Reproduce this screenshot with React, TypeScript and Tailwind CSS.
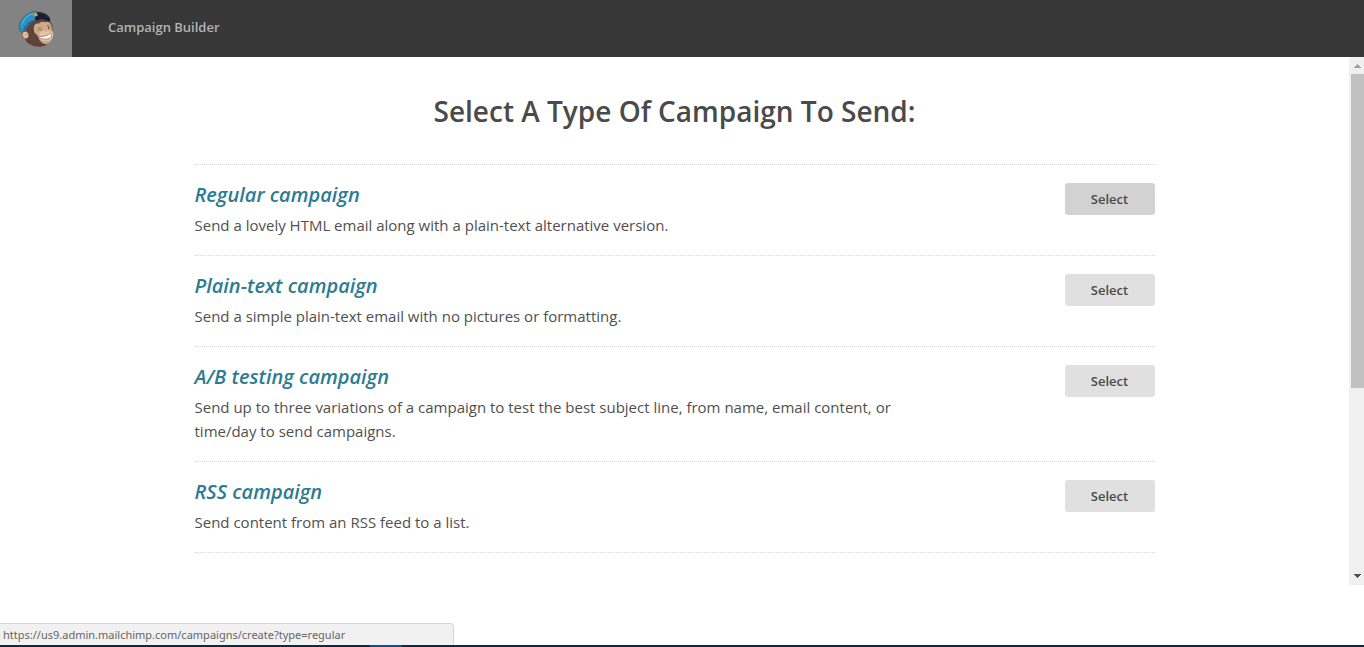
const campaigns = [
  {
    id: "regular",
    title: "Regular campaign",
    text: "Send a lovely HTML email along with a plain-text alternative version.",
  },
  {
    id: "plaintext",
    title: "Plain-text campaign",
    text: "Send a simple plain-text email with no pictures or formatting.",
  },
  {
    id: "ab",
    title: "A/B testing campaign",
    text: "Send up to three variations of a campaign to test the best subject line, from name, email content, or time/day to send campaigns.",
  },
  {
    id: "rss",
    title: "RSS campaign",
    text: "Send content from an RSS feed to a list.",
  },
];

function MonkeyLogo() {
  return (
    <svg viewBox="0 0 132 132" className="size-11" aria-hidden="true">
      {/* head */}
      <path
        d="M28 68 C24 76 24 80 30 86 C31 98 36 109 47 115 C62 124 84 125 97 116 C108 110 112 103 114 96 C118 88 120 80 115 72 C118 56 112 46 98 40 L60 38 Z"
        fill="#5e423b"
      />
      {/* face */}
      <path
        d="M94 49 C87 45 78 47 74 53 C68 51 61 55 60 62 C58 69 60 76 62 81 C66 84 71 88 74 96 C76 105 83 112 93 114 C104 114 111 107 114 98 C119 89 121 80 113 71 C115 60 110 49 102 48 C99 47 96 48 94 49 Z"
        fill="#cfaa8a"
      />
      <path d="M78 78 C86 70 102 70 114 74 C118 80 118 90 113 99 C103 108 86 106 75 96 Z" fill="#e5c5a1" />
      {/* ear */}
      <path
        d="M38 77 C31 73 24 78 25 86 C26 95 34 101 41 96 C46 91 45 81 38 77 Z"
        fill="#e8c3a2"
        stroke="#7b5848"
        strokeWidth="2"
      />
      <path d="M32 83 C37 82 39 88 35 91" fill="none" stroke="#a97a60" strokeWidth="2" />
      {/* eyes and nose */}
      <path d="M71 68 C76 64 82 66 85 71 M71 74 C76 70 80 71 84 75" fill="none" stroke="#a27c50" strokeWidth="3" />
      <path d="M99 60 C103 57 106 59 108 62" fill="none" stroke="#7b5741" strokeWidth="3" />
      <ellipse cx="104" cy="66" rx="2" ry="3" fill="#4a332a" />
      <path d="M92 76 C94 72 98 73 99 76 M103 76 C105 72 109 73 110 76" fill="none" stroke="#ad8263" strokeWidth="2" />
      {/* smile */}
      <path
        d="M75 91 C85 93 101 90 111 81 C113 87 112 93 108 97 C98 101 84 100 76 95 Z"
        fill="#ffffff"
        stroke="#8c6650"
        strokeWidth="2"
      />
      {/* cap */}
      <path
        d="M18 74 C14 62 15 52 24 41 C31 30 44 20 58 17 C67 14 74 18 76 24 L67 42 C52 47 41 57 34 75 C28 79 21 80 18 74 Z"
        fill="#2c92c4"
        stroke="#3c4c57"
        strokeWidth="2"
      />
      <path d="M23 56 C28 39 41 27 57 22" fill="none" stroke="#45a8d4" strokeWidth="5" />
      <path d="M29 74 C34 57 46 47 64 42" fill="none" stroke="#1f6c96" strokeWidth="4" />
      <path
        d="M62 20 C78 14 98 21 107 35 C111 42 109 47 102 46 C93 38 79 37 67 45 C61 37 60 27 62 20 Z"
        fill="#171f31"
      />
      <path d="M76 22 C88 22 97 27 103 34" fill="none" stroke="#35415a" strokeWidth="2" />
      <path d="M60 17 L65 21 L70 19 L69 25 L72 30 L66 30 L63 35 L61 29 L56 27 L61 24 Z" fill="#b9ad55" />
    </svg>
  );
}

function ScrollRail() {
  return (
    <div className="flex w-[15px] shrink-0 flex-col bg-[#f0f0f0]" aria-hidden="true">
      <div className="flex h-[17px] shrink-0 items-center justify-center pl-0.5">
        <svg viewBox="0 0 7 4" className="h-1 w-[7px]" shapeRendering="crispEdges">
          <path d="M3 0h1v1h1v1h1v1h1v1H0V3h1V2h1V1h1z" fill="#a3a3a3" />
        </svg>
      </div>
      <div className="ml-0.5 grow-[7] basis-0 bg-[#c1c1c1]" />
      <div className="grow-[4] basis-0" />
      <div className="flex h-[17px] shrink-0 items-center justify-center pb-px pl-0.5">
        <svg viewBox="0 0 7 4" className="h-1 w-[7px]" shapeRendering="crispEdges">
          <path d="M0 0h7v1H6v1H5v1H4v1H3V3H2V2H1V1H0z" fill="#505050" />
        </svg>
      </div>
    </div>
  );
}

export default function App() {
  return (
    <div className="flex min-h-screen flex-col bg-white font-['Open_Sans',sans-serif] text-[#4a4a4a]">
      <header className="flex h-[57px] shrink-0 items-center bg-[#373737]">
        <a
          href="#home"
          aria-label="MailChimp home"
          className="flex h-full w-[72px] items-center justify-center bg-[#838383] pb-px"
        >
          <MonkeyLogo />
        </a>
        <span className="ml-9 pb-1 text-[13px] leading-5 font-semibold text-[#b3b3b3]">Campaign Builder</span>
      </header>

      <div className="flex flex-1">
        <main className="min-w-0 flex-1 px-6">
          <h1 className="pt-[34px] text-center text-[28px] leading-10 font-semibold">
            Select A Type Of Campaign To Send:
          </h1>
          <ul className="mx-auto mt-[33px] max-w-[960px] border-b border-dotted border-[#d6d6d6]">
            {campaigns.map((item, index) => (
              <li
                key={item.id}
                className="flex items-start justify-between gap-6 border-t border-dotted border-[#d6d6d6] py-[18px]"
              >
                <div className="max-w-[720px]">
                  <h2 className="mb-1.5 text-[20px] leading-6 font-semibold text-[#2c7c91] italic">
                    <a href={`#${item.id}`}>{item.title}</a>
                  </h2>
                  <p className="text-[15px] leading-6 text-[#505050]">{item.text}</p>
                </div>
                <button
                  type="button"
                  aria-label={`Select ${item.title}`}
                  className={`h-8 w-[90px] shrink-0 cursor-pointer rounded-[3px] text-[13px] leading-5 font-semibold ${
                    index === 0 ? "bg-[#d2d2d2]" : "bg-[#e0e0e0] hover:bg-[#d2d2d2]"
                  }`}
                >
                  Select
                </button>
              </li>
            ))}
          </ul>
        </main>
        <ScrollRail />
      </div>

      <footer className="shrink-0 pt-[38px]">
        <div className="h-[22px] w-1/3 max-w-[454px] rounded-tr border-t border-r border-[#d5d5d5] bg-[#f1f1f1] pl-[3px] font-['Noto_Sans',sans-serif] text-[11px] leading-[22px] whitespace-nowrap text-[#666666]">
          https://us9.admin.mailchimp.com/campaigns/create?type=regular
        </div>
        <div className="flex h-0.5 bg-[#0d2a45]">
          <div className="ml-[370px] w-8 bg-[#0b5290]" />
        </div>
      </footer>
    </div>
  );
}
